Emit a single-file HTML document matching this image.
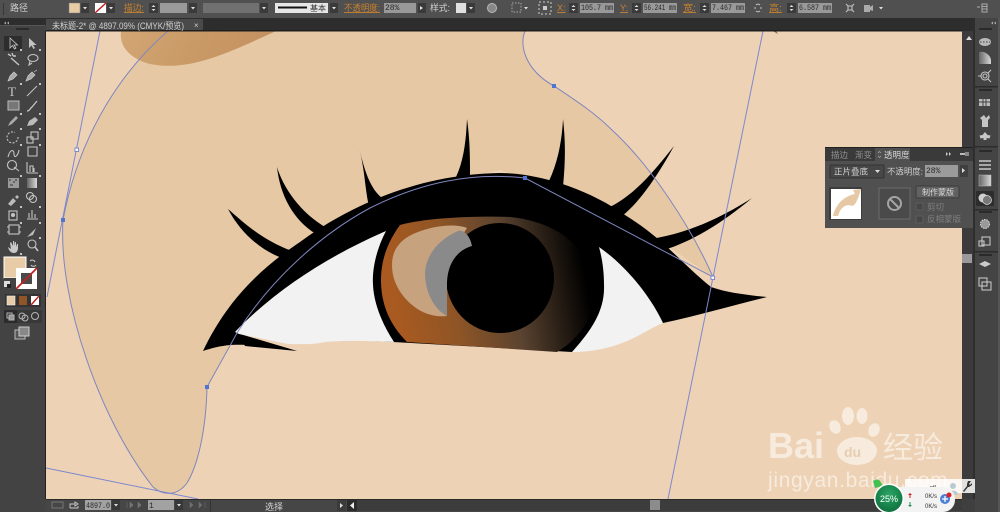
<!DOCTYPE html>
<html><head><meta charset="utf-8"><style>
html,body{margin:0;padding:0;width:1000px;height:512px;overflow:hidden;background:#3c3c3c}
svg{display:block}
text{font-family:"Liberation Sans","WenQuanYi Zen Hei","Noto Sans CJK SC",sans-serif}
.t{fill:#d0d0d0;font-size:9px}
.o{fill:#c8812f;font-size:9px;text-decoration:underline}
.m{fill:#2b2b2b;font-family:"Liberation Mono","Noto Sans CJK SC",monospace;font-size:8px}
.i{fill:none;stroke:#c4c4c4;stroke-width:1.1}
.f{fill:#c4c4c4}
</style></head><body>
<svg width="1000" height="512" viewBox="0 0 1000 512" xmlns="http://www.w3.org/2000/svg">
<defs>
<linearGradient id="bl" x1="0" y1="0" x2="1" y2="0.1"><stop offset="0" stop-color="#d2a674"/><stop offset=".5" stop-color="#c99a66"/><stop offset="1" stop-color="#c49160"/></linearGradient>
<linearGradient id="ir" gradientUnits="userSpaceOnUse" x1="395" y1="310" x2="585" y2="275"><stop offset="0" stop-color="#a95a20"/><stop offset=".3" stop-color="#8f5526"/><stop offset=".62" stop-color="#5a4330"/><stop offset="1" stop-color="#000"/></linearGradient>
<linearGradient id="gg" x1="0" y1="0" x2="1" y2="0"><stop offset="0" stop-color="#666"/><stop offset="1" stop-color="#d8d8d8"/></linearGradient>
<radialGradient id="gr" cx=".5" cy=".35" r=".7"><stop offset="0" stop-color="#2aa564"/><stop offset="1" stop-color="#0d6e3c"/></radialGradient>
</defs>

<!-- canvas -->
<rect x="46" y="31" width="916" height="468" fill="#edd2b5"/>
<path d="M168 31C125 68 80 130 63 220C58 300 100 420 153 487C165 497 178 495 187 483C198 465 206 430 207 387L237 333L300 250L400 190L500 170L600 200L713 277C690 225 650 165 612 130C595 113 575 100 554 86C525 70 519 45 525 31Z" fill="#e6c8a4"/>
<path d="M121 31C119 45 128 58 150 64C190 72 230 52 276 31Z" fill="url(#bl)"/>

<!-- lashes -->
<g fill="#000">
<path d="M228 209C243 222 262 240 292 251L282 258C260 250 240 232 228 209Z"/>
<path d="M277 167C283 187 300 213 327 228L316 234C293 220 280 195 277 167Z"/>
<path d="M359 148C363 163 368 187 382 198L369 206C365 190 365 170 359 148Z"/>
<path d="M467 119C470 140 470 160 470 176L456 177C464 160 466 140 467 119Z"/>
<path d="M563 119C566 145 565 165 563 187L549 181C558 162 562 140 563 119Z"/>
<path d="M674 146C655 170 635 195 608 208L622 216C640 202 658 175 674 146Z"/>
<path d="M752 198C730 212 695 232 651 239L664 250C690 242 720 225 752 198Z"/>
<!-- lid + outer eye -->
<path d="M203 351C225 305 255 272 300 242C350 205 420 174 500 173C540 173 590 190 625 215C665 240 680 262 711 287C725 292 745 295 767 297C730 306 700 315 663 323L600 330L572 352L393 342L240 334L297 351C275 346 250 344 230 345C220 346 212 348 203 351Z"/>
</g>

<!-- sclera -->
<path d="M235 332C275 290 330 255 386 231C376 250 372 270 373 285C374 305 383 325 394 342C370 341 350 340 325 342C312 345 300 344 288 344L239 334Z" fill="#f2f2f2"/>
<path d="M238 334L297 351L245 346Z" fill="#000"/>
<path d="M599 247C625 265 650 295 663 323C650 328 635 340 610 347C595 351 583 352 572 352C592 330 605 310 604 285C604 270 602 258 599 247Z" fill="#f2f2f2"/>

<!-- iris -->
<path d="M400 225C430 217 480 216 510 217C560 222 590 250 595 285C596 310 585 335 557 352L407 342C390 325 381 305 381 280C381 258 389 240 400 225Z" fill="url(#ir)"/>
<ellipse cx="500" cy="278" rx="54" ry="55" fill="#000"/>
<path d="M392 265C392 248 402 238 418 232C433 226 455 223 467 228L440 270L447 316C430 318 415 310 404 297C396 287 392 277 392 265Z" fill="#c6a27f"/>
<path d="M425 273C426 255 438 240 458 231C463 229 470 235 472 246C458 250 448 262 447 282L447 316C435 310 425 293 425 273Z" fill="#8a8a8a"/>

<!-- paths -->
<g fill="none" stroke="#7f86bd" stroke-width="1">
<path d="M168 31C125 68 80 130 63 220C58 300 100 420 153 487C165 497 178 495 187 483C198 465 206 430 207 387L237 333C270 280 320 235 370 208C420 183 470 172 525 178L713 277"/>
<path d="M525 31C519 45 525 70 554 86C575 100 595 113 612 130C650 165 690 225 713 277"/>
</g>
<g fill="none" stroke="#7d88cf" stroke-width="1">
<path d="M100 31L47 297"/><path d="M763 31L668 499"/><path d="M46 468L198 499"/>
</g>
<g fill="#4f74d2"><rect x="61" y="218" width="4" height="4"/><rect x="205" y="385" width="4" height="4"/><rect x="523" y="176" width="4" height="4"/><rect x="552" y="84" width="4" height="4"/></g>
<rect x="75" y="148" width="3.5" height="3.500" fill="#fff" stroke="#7d88cf"/><rect x="711" y="276" width="3.500" height="3.500" fill="#fff" stroke="#7d88cf"/>
<path d="M773 31L778 34L776 31Z" fill="#7a5a34"/>

<!-- watermark -->
<g fill="#fff" fill-opacity=".55">
<text x="768" y="458" font-size="36" font-weight="700" style="font-family:'Liberation Sans',sans-serif">Bai</text>
<ellipse cx="857" cy="451" rx="20" ry="14"/>
<ellipse cx="835" cy="427" rx="5.500" ry="7" transform="rotate(-25 835 427)"/>
<ellipse cx="848" cy="416" rx="6" ry="9"/>
<ellipse cx="862" cy="416" rx="5.500" ry="8"/>
<ellipse cx="874" cy="430" rx="5.500" ry="7" transform="rotate(25 874 430)"/>
<text x="883" y="458" font-size="30" style="font-family:'Noto Sans CJK SC',sans-serif">经验</text>
<text x="768" y="487" font-size="21" letter-spacing=".65" style="font-family:'Liberation Sans',sans-serif">jingyan.baidu.com</text>
</g>
<text x="844" y="457" font-size="14" font-weight="700" fill="#e7cdb0" style="font-family:'Liberation Sans',sans-serif">du</text>

<!-- top bars -->
<rect x="0" y="0" width="1000" height="18" fill="#505050"/>
<rect x="0" y="18" width="1000" height="13" fill="#2d2d2d"/>
<rect x="46" y="19" width="157" height="12" fill="#4a4a4a"/>
<rect x="46" y="30" width="916" height="1.5" fill="#1e1e1e"/>
<text x="10" y="11" class="t">路径</text>
<rect x="3" y="3" width="1" height="12" fill="#383838"/>
<rect x="69" y="3" width="11" height="10" fill="#e8cca8" stroke="#777" stroke-width=".5"/>
<rect x="95" y="3" width="11" height="10" fill="#fff"/><path d="M95 13L106 3" stroke="#c02020" stroke-width="1.5"/>
<g fill="#3a3a3a"><rect x="81" y="3" width="8" height="10"/><rect x="107" y="3" width="8" height="10"/><rect x="189" y="3" width="8" height="10"/><rect x="260" y="3" width="8" height="10"/><rect x="330" y="3" width="8" height="10"/><rect x="467" y="3" width="8" height="10"/><rect x="418" y="3" width="8" height="10"/><rect x="149" y="3" width="9" height="10"/><rect x="569" y="3" width="9" height="10"/><rect x="632" y="3" width="9" height="10"/><rect x="700" y="3" width="9" height="10"/><rect x="787" y="3" width="9" height="10"/></g>
<g fill="#ddd"><path d="M83 7h4l-2 2.5z M109 7h4l-2 2.5z M191 7h4l-2 2.5z M262 7h4l-2 2.5z M332 7h4l-2 2.5z M469 7h4l-2 2.5z M420 6v4l3-2z M524 7h4l-2 2.5z M879 7h4l-2 2.5z"/>
<path d="M151.500 7l2-2 2 2z M151.500 9l2 2 2-2z M571.500 7l2-2 2 2z M571.500 9l2 2 2-2z M634.500 7l2-2 2 2z M634.500 9l2 2 2-2z M702.500 7l2-2 2 2z M702.500 9l2 2 2-2z M789.500 7l2-2 2 2z M789.500 9l2 2 2-2z"/></g>
<text x="124" y="11" class="o" textLength="20" lengthAdjust="spacingAndGlyphs">描边:</text>
<rect x="160" y="3" width="27" height="10" fill="#9a9a9a"/>
<rect x="203" y="3" width="56" height="10" fill="#707070"/>
<rect x="275" y="3" width="53" height="10" fill="#e6e6e6"/><rect x="278" y="6.500" width="29" height="2" fill="#111"/>
<text x="310" y="11" font-size="8" fill="#333">基本</text>
<text x="344" y="11" class="o" textLength="36" lengthAdjust="spacingAndGlyphs">不透明度:</text>
<rect x="384" y="3" width="32" height="10" fill="#999"/><text x="385" y="10" class="m">28%</text>
<text x="430" y="11" class="t" textLength="20" lengthAdjust="spacingAndGlyphs">样式:</text>
<rect x="456" y="3" width="10" height="10" fill="#e0e0e0"/>
<circle cx="492" cy="8" r="4.500" fill="#888" stroke="#bbb"/>
<rect x="512" y="3" width="9" height="9" fill="none" stroke="#aaa" stroke-dasharray="1.500 1.500"/>
<rect x="539" y="2" width="12" height="12" fill="none" stroke="#ccc" stroke-dasharray="2 2"/><rect x="543" y="6" width="4" height="4" fill="#ccc"/>
<text x="557" y="11" class="o">X:</text>
<rect x="580" y="3" width="34" height="10" fill="#999"/><text x="581" y="10" class="m" textLength="32" lengthAdjust="spacingAndGlyphs">105.7 mm</text>
<text x="620" y="11" class="o">Y:</text>
<rect x="643" y="3" width="34" height="10" fill="#999"/><text x="644" y="10" class="m" textLength="32" lengthAdjust="spacingAndGlyphs">56.241 mm</text>
<text x="683" y="11" class="o" textLength="13" lengthAdjust="spacingAndGlyphs">宽:</text>
<rect x="711" y="3" width="34" height="10" fill="#999"/><text x="712" y="10" class="m" textLength="32" lengthAdjust="spacingAndGlyphs">7.467 mm</text>
<path d="M754 8h2M760 8h2M756 5a3 3 0 0 1 4 0M756 11a3 3 0 0 0 4 0" class="i"/>
<text x="769" y="11" class="o" textLength="13" lengthAdjust="spacingAndGlyphs">高:</text>
<rect x="798" y="3" width="34" height="10" fill="#999"/><text x="799" y="10" class="m" textLength="32" lengthAdjust="spacingAndGlyphs">6.587 mm</text>
<path d="M846 4l2 2h4l2-2M846 12l2-2h4l2 2M848 6v4M852 6v4" class="i"/>
<path d="M864 5h6v2l3-2v6l-3-1v2h-6z" fill="#aaa"/>
<path d="M977 7h3M982 4h5v8h-5zM982 6.500h5M982 9h5" fill="none" stroke="#aaa"/>
<text x="52" y="29" font-size="9" fill="#cfcfcf" textLength="132" lengthAdjust="spacingAndGlyphs">未标题-2* @ 4897.09% (CMYK/预览)</text>
<text x="194" y="28" font-size="8" fill="#ccc">×</text>

<!-- left toolbar -->
<rect x="0" y="18" width="46" height="494" fill="#434343"/>
<rect x="0" y="18" width="46" height="7" fill="#2d2d2d"/>
<rect x="0" y="25" width="45" height="1" fill="#555"/>
<rect x="45" y="31" width="1" height="468" fill="#222"/>
<path d="M4 23l2-1.500v3zM7 23l2-1.500v3z" fill="#aaa"/>
<rect x="16" y="28" width="13" height="2" fill="#2a2a2a"/>
<rect x="4" y="36" width="18" height="15" fill="#2d2d2d"/>
<path d="M10 38v10l2.500-2.500 2 3.500 1.500-1-2-3h3.500z" fill="#333" stroke="#ccc" stroke-width=".8"/>
<path d="M29 38v10l2.500-2.500 2 3.500 1.500-1-2-3h3.500z" class="f"/>
<path d="M8 54l3 2M12 53l1 3M16 56l-3 0M11 58l8 7" stroke="#c4c4c4" fill="none" stroke-width="1.400"/>
<ellipse cx="33" cy="58" rx="5" ry="3.500" class="i"/><path d="M30 61l-1 4 3-2" class="i"/>
<path d="M8 81l2-5 4-4 3 3-4 4zM26 81l2-5 4-4 3 3-4 4zM34 72l3-2" fill="#aaa" stroke="#ccc" stroke-width=".7"/>
<text x="8" y="96" font-size="13" fill="#c8c8c8" style="font-family:'Liberation Serif',serif">T</text>
<path d="M27 96L37 86" stroke="#c4c4c4"/>
<rect x="8" y="101" width="11" height="9" fill="#777" stroke="#bbb"/>
<path d="M27 111c3 0 3-3 5-4l5-6" fill="none" stroke="#c4c4c4" stroke-width="1.300"/>
<path d="M8 126l2-4 6-6 2 2-6 6z" fill="#aaa"/>
<path d="M27 126l2-5 6-4 3 3-5 5z" fill="#bbb"/>
<path d="M18 137a5.500 5.500 0 1 1-3-4.500" class="i" stroke-dasharray="2 1.500"/>
<rect x="27" y="137" width="6" height="6" class="i"/><rect x="31" y="132" width="7" height="7" class="i"/>
<path d="M8 157c2-8 6-8 6-3s4 2 5-4M28 147h9v9h-9z" class="i"/>
<circle cx="12" cy="165" r="4.500" class="i"/><path d="M14 167l5 4" class="i"/>
<path d="M27 173v-11M27 173h11M30 172v-6h3v6M34 172v-4" class="i"/>
<rect x="8" y="178" width="11" height="10" fill="#999"/><path d="M9 180h2M13 182h2M10 185h3M16 179v2" stroke="#333"/>
<rect x="27" y="178" width="10" height="10" fill="url(#gg)"/>
<path d="M8 204l5-6 3 3-5 5zM15 197l2-2 2 2-2 2z" fill="#bbb"/>
<circle cx="30" cy="196" r="3.500" class="i"/><circle cx="33" cy="199" r="3.500" class="i"/>
<rect x="9" y="211" width="8" height="9" class="i"/><circle cx="13" cy="215" r="2" class="f"/>
<path d="M27 219h11M29 218v-5M32 218v-8M35 218v-4" class="i" stroke-width="1.400"/>
<rect x="9" y="225" width="10" height="9" class="i"/><path d="M7 227h2M19 227h2M7 232h2M19 232h2" class="i"/>
<path d="M27 237l9-9-3 7z" fill="#bbb"/>
<path d="M8 247c1 4 3 6 6 6s4-3 4-5v-4l-1 0-1 3v-5h-1v4l-1-5h-1v5l-2-4-1 1 1 6z" fill="#c8c8c8"/>
<circle cx="32" cy="244" r="4" class="i"/><path d="M35 247l3 4" stroke="#c4c4c4" stroke-width="1.600"/>
<g fill="#c4c4c4"><path d="M20 49h2v2h-2zM39 49h2v2h-2zM20 83h2v2h-2zM39 83h2v2h-2zM39 113h2v2h-2zM20 113h2v2h-2zM20 128h2v2h-2zM39 128h2v2h-2zM20 144h2v2h-2zM39 144h2v2h-2zM20 175h2v2h-2zM39 175h2v2h-2zM20 206h2v2h-2zM39 206h2v2h-2zM20 222h2v2h-2zM39 222h2v2h-2zM39 237h2v2h-2zM20 253h2v2h-2z"/></g>
<rect x="4" y="257" width="22" height="21" fill="#e8cca8" stroke="#fff"/>
<rect x="16" y="268" width="21" height="21" fill="#fff"/><rect x="21" y="273" width="11" height="11" fill="#4a4a4a"/><path d="M16 289L37 268" stroke="#c02222" stroke-width="1.800"/>
<rect x="4" y="278" width="12" height="11" fill="#434343"/>
<rect x="4" y="281" width="6" height="6" fill="#ddd"/><rect x="7" y="284" width="4" height="4" fill="#222"/>
<path d="M30 261a3 3 0 0 1 5 1M36 265a3 3 0 0 1-5 0" class="i"/>
<rect x="5" y="294" width="36" height="13" fill="#333"/>
<rect x="7" y="296" width="8" height="9" fill="#e8cca8" stroke="#eee" stroke-width=".6"/><rect x="19" y="296" width="8" height="9" fill="#8f5526"/><rect x="31" y="296" width="8" height="9" fill="#fff"/><path d="M31 305L39 296" stroke="#c02222" stroke-width="1.500"/>
<rect x="4" y="310" width="38" height="13" rx="1" fill="#383838"/>
<rect x="4" y="310" width="13" height="13" fill="#2b2b2b"/>
<g fill="none" stroke="#b5b5b5"><rect x="7" y="313" width="5" height="5"/><rect x="9" y="315" width="5" height="5" fill="#999"/><circle cx="22" cy="316" r="3"/><circle cx="25" cy="318" r="3"/><circle cx="35" cy="316" r="3.500"/></g>
<rect x="15" y="330" width="10" height="9" fill="#555" stroke="#bbb"/><rect x="19" y="327" width="10" height="9" fill="#888" stroke="#ccc"/>

<!-- right strip -->
<rect x="962" y="31" width="13" height="468" fill="#3b3b3b"/>
<path d="M966 40h6l-3-4z" fill="#ddd"/>
<rect x="962" y="254" width="10" height="9" fill="#9a9a9a"/>
<rect x="975" y="18" width="25" height="494" fill="#444"/>
<rect x="973" y="18" width="2" height="494" fill="#2e2e2e"/>
<rect x="998" y="18" width="2" height="494" fill="#555"/>
<path d="M991 23l2-1.500v3zM994 23l2-1.500v3z" fill="#aaa"/>
<g fill="#2c2c2c"><rect x="975" y="86" width="23" height="1.500"/><rect x="975" y="146" width="23" height="1.500"/><rect x="975" y="209" width="23" height="1.500"/><rect x="975" y="251" width="23" height="1.500"/></g>
<g fill="#2a2a2a"><rect x="979" y="28" width="13" height="2"/><rect x="979" y="89" width="13" height="2"/><rect x="979" y="150" width="13" height="2"/><rect x="979" y="211" width="13" height="2"/><rect x="979" y="254" width="13" height="2"/></g>
<ellipse cx="985" cy="42" rx="6" ry="4" fill="#b8b8b8"/><path d="M980 42h10" stroke="#444" stroke-dasharray="1.500 1.500"/>
<path d="M979 64h12v-4a10 10 0 0 0-12-8z" fill="url(#gg)"/>
<circle cx="985" cy="76" r="4" class="i"/><circle cx="985" cy="76" r="2" class="i"/><path d="M988 73l3-3M988 79l3 3M981 76h-3" class="i"/>
<rect x="979" y="99" width="11" height="7" fill="#bbb"/><path d="M983 99v7M986 99v7M979 102h11" stroke="#444"/>
<path d="M982 127v-7l-2-2 4-3 2 3 3-3 1 3-2 2v7z" fill="#c4c4c4"/>
<path d="M985 132l2.500 3 3 .5-1 3-3-.5v2h-3v-2l-3 .5-1-3 3-.5z" fill="#c8c8c8"/>
<path d="M979 161h12M979 165h12M979 169h12" stroke="#c8c8c8" stroke-width="1.500"/>
<rect x="979" y="175" width="12" height="11" fill="url(#gg)" stroke="#bbb" stroke-width=".5"/>
<rect x="976" y="191" width="18" height="15" rx="1" fill="#2c2c2c"/>
<circle cx="983" cy="198" r="4.500" fill="#ccc"/><circle cx="987" cy="200" r="4.500" fill="#777" stroke="#ddd" stroke-width=".7"/>
<circle cx="985" cy="224" r="4.500" fill="#999" stroke="#ddd" stroke-dasharray="1.500 1"/>
<rect x="982" y="237" width="8" height="8" class="i"/><rect x="979" y="241" width="5" height="5" class="i"/>
<path d="M985 261l6 3-6 3-6-3zM979 268l6 3 6-3-6 3z" fill="#ccc"/>
<rect x="979" y="278" width="8" height="8" class="i"/><rect x="982" y="282" width="9" height="8" class="i"/>

<!-- transparency panel -->
<rect x="825" y="147" width="148" height="81" fill="#505050"/>
<rect x="825" y="147" width="148" height="1" fill="#222"/>
<rect x="825" y="148" width="148" height="13" fill="#3a3a3a"/>
<rect x="875" y="148" width="35" height="13" fill="#505050"/>
<text x="831" y="158" font-size="8.500" fill="#8f8f8f">描边</text>
<text x="855" y="158" font-size="8.500" fill="#8f8f8f">渐变</text>
<text x="884" y="158" font-size="8.500" fill="#d8d8d8">透明度</text>
<path d="M878 153l1.500-1.500 1.500 1.500M878 156l1.500 1.500 1.500-1.500" fill="none" stroke="#aaa" stroke-width=".7"/>
<path d="M946 152v4l2-2zM949 152v4l2-2z" fill="#ccc"/>
<rect x="960" y="153" width="5" height="2" fill="#bbb"/><rect x="965" y="152" width="4" height="4" fill="#888"/>
<rect x="830" y="165" width="54" height="13" rx="1" fill="#474747" stroke="#333"/>
<text x="834" y="174.500" font-size="8.500" fill="#d0d0d0">正片叠底</text>
<path d="M875 170h5l-2.500 3z" fill="#ddd"/>
<text x="887" y="174.500" font-size="8.500" fill="#cfcfcf" textLength="36" lengthAdjust="spacingAndGlyphs">不透明度:</text>
<rect x="925" y="165" width="33" height="12" fill="#9b9b9b"/><text x="926" y="173" class="m">28%</text>
<rect x="960" y="165" width="8" height="12" fill="#3f3f3f"/><path d="M962 168v5l3-2.500z" fill="#ddd"/>
<rect x="829" y="187" width="33" height="33" fill="#3d3d3d"/>
<rect x="831" y="189" width="30" height="30" fill="#fff"/>
<path d="M833 216C836 203 845 196 855 194L853 190L861 189C858 199 856 205 852 206C846 203 840 208 838 216Z" fill="#e6c8a4"/>
<rect x="879" y="188" width="31" height="31" fill="#4a4a4a" stroke="#6b6b6b"/>
<circle cx="894.500" cy="203.500" r="6.500" fill="none" stroke="#a5a5a5" stroke-width="2"/><path d="M890 199l9 9" stroke="#a5a5a5" stroke-width="2"/>
<rect x="916" y="186" width="43" height="12" rx="1" fill="#616161" stroke="#3c3c3c"/>
<text x="922" y="195" font-size="8" fill="#dcdcdc">制作蒙版</text>
<rect x="916" y="203" width="7" height="7" fill="#474747" stroke="#5c5c5c"/>
<rect x="916" y="216" width="7" height="7" fill="#474747" stroke="#5c5c5c"/>
<text x="927" y="210" font-size="8.500" fill="#7f7f7f">剪切</text>
<text x="927" y="222" font-size="8.500" fill="#7f7f7f">反相蒙版</text>

<!-- bottom bar -->
<rect x="46" y="499" width="916" height="13" fill="#464646"/>
<rect x="46" y="499" width="916" height="1" fill="#2b2b2b"/>
<rect x="52" y="502" width="11" height="6" fill="none" stroke="#777"/>
<path d="M70 508v-4h5M75 502l3 2-3 2zM70 508h8v-2" stroke="#ccc" fill="none" stroke-width=".9"/>
<rect x="85" y="500" width="26" height="10" fill="#a2a2a2"/><text x="86" y="508" class="m" textLength="24" lengthAdjust="spacingAndGlyphs">4897.0</text>
<rect x="112" y="500" width="8" height="10" fill="#383838"/><path d="M114 504h4l-2 2.500z" fill="#ddd"/>
<path d="M127 502v6M133 505l-3-3v6zM141 505l-3-3v6z" fill="#777" stroke="#777" stroke-width=".5"/>
<rect x="148" y="500" width="26" height="10" fill="#a2a2a2"/><text x="149" y="508" class="m">1</text>
<rect x="175" y="500" width="8" height="10" fill="#383838"/><path d="M177 504h4l-2 2.500z" fill="#ddd"/>
<path d="M190 502l3 3-3 3zM199 502l3 3-3 3zM205 502v6" fill="#6f6f6f" stroke="#6f6f6f" stroke-width=".5"/>
<rect x="210" y="500" width="1" height="12" fill="#333"/>
<text x="265" y="510" font-size="9" fill="#d4d4d4">选择</text>
<rect x="337" y="500" width="9" height="11" fill="#3b3b3b"/><path d="M340 503v5l3-2.500z" fill="#ddd"/>
<rect x="347" y="500" width="10" height="11" fill="#2b2b2b"/><path d="M354 502v7l-4-3.500z" fill="#eee"/>
<rect x="357" y="500" width="605" height="11" fill="#3c3c3c"/>
<rect x="650" y="500" width="10" height="10" fill="#8c8c8c"/>
<rect x="962" y="499" width="13" height="13" fill="#3f3f3f"/>

<!-- widget -->
<rect x="905" y="479" width="70" height="14" fill="#fff" fill-opacity=".85"/>
<path d="M968 481l3 0-2 3 1 1 2-2 0 2-3 2-1 0-4 5-1-1 4-5 0-2z" fill="#333"/>
<circle cx="953" cy="486" r="3" fill="#b8cbd3"/><path d="M948 495c0-6 10-6 10 0z" fill="#b8cbd3"/>
<text x="930" y="489" font-size="5.500" fill="#333">nfl</text>
<path d="M873 481c3-2 6-2 7 0l3 5-8 2z" fill="#44c050"/>
<rect x="885" y="487" width="70" height="25" rx="12" fill="#f3f3f3"/>
<circle cx="889" cy="498.500" r="15" fill="#fff"/>
<circle cx="889" cy="498.500" r="13.500" fill="url(#gr)"/>
<text x="889" y="502" font-size="9" fill="#fff" text-anchor="middle">25%</text>
<text x="925" y="498" font-size="6" fill="#333">0K/s</text>
<text x="925" y="508" font-size="6" fill="#333">0K/s</text>
<path d="M910 493l-2 2h1.500v3h1v-3h1.500z" fill="#c82020"/>
<path d="M910 507l-2-2h1.500v-3h1v3h1.500z" fill="#1f9050"/>
<circle cx="945" cy="499" r="5" fill="#4b80d8"/><path d="M945 496v6M942 499h6" stroke="#fff" stroke-width="1.300"/>
<circle cx="949" cy="495" r="2.500" fill="#d22"/>
</svg>
</body></html>
